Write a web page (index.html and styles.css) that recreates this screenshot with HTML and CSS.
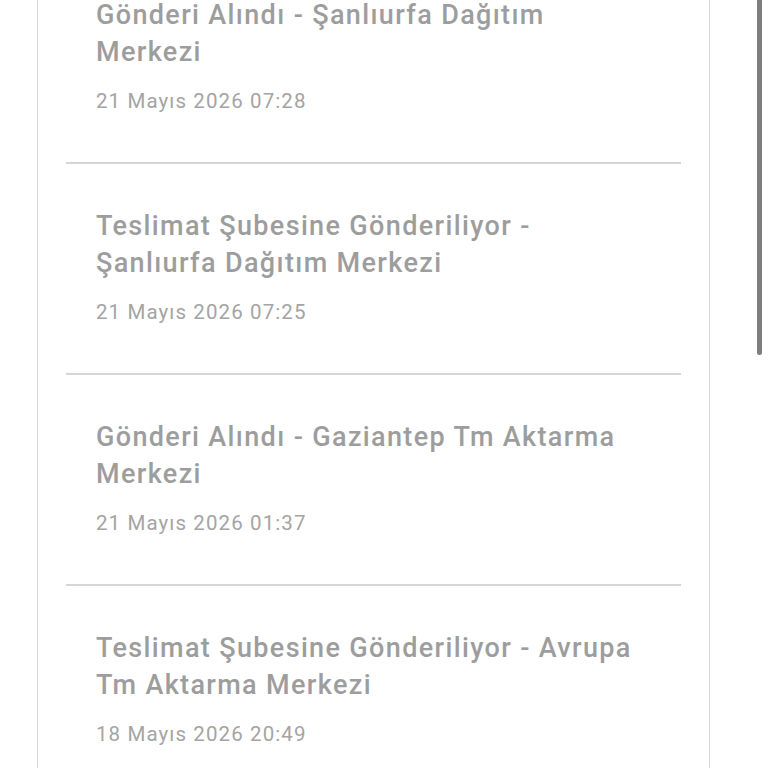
FILE: index.html
```html
<!DOCTYPE html>
<html lang="tr">
<head>
<meta charset="utf-8">
<link rel="stylesheet" href="styles.css">
</head>
<body>
<div class="card">
  <div class="item">
    <div class="title">Gönderi Alındı - Şanlıurfa Dağıtım Merkezi</div>
    <div class="date">21 Mayıs 2026 07:28</div>
  </div>
  <div class="item">
    <div class="title">Teslimat Şubesine Gönderiliyor - Şanlıurfa Dağıtım Merkezi</div>
    <div class="date">21 Mayıs 2026 07:25</div>
  </div>
  <div class="item">
    <div class="title">Gönderi Alındı - Gaziantep Tm Aktarma Merkezi</div>
    <div class="date">21 Mayıs 2026 01:37</div>
  </div>
  <div class="item">
    <div class="title">Teslimat Şubesine Gönderiliyor - Avrupa Tm Aktarma Merkezi</div>
    <div class="date">18 Mayıs 2026 20:49</div>
  </div>
</div>
<div class="scrollbar"></div>
</body>
</html>
```
FILE: styles.css
```css
html, body {
  margin: 0;
  padding: 0;
  background: #ffffff;
  overflow: hidden;
  height: 768px;
}
body {
  font-family: Roboto, "Noto Sans", sans-serif;
}
.card {
  margin: -47px 0 0 37px;
  border-left: 1px solid #d6d6d6;
  border-right: 1px solid #d6d6d6;
  padding: 0 28px;
  box-sizing: content-box;
  width: 615px;
}
.item {
  padding: 44px 30px 47px 30px;
  border-bottom: 2px solid #d6d6d6;
}
.title {
  font-size: 27px;
  line-height: 37px;
  font-weight: 500;
  letter-spacing: 1.35px;
  color: #9d9d9d;
}
.date {
  margin-top: 16px;
  font-size: 20.5px;
  line-height: 28px;
  letter-spacing: 1.1px;
  color: #a4a4a4;
}
.scrollbar {
  position: fixed;
  top: 0;
  left: 757px;
  width: 5px;
  height: 355px;
  background: #7e7e7e;
  border-radius: 0 0 3px 3px;
}
```
